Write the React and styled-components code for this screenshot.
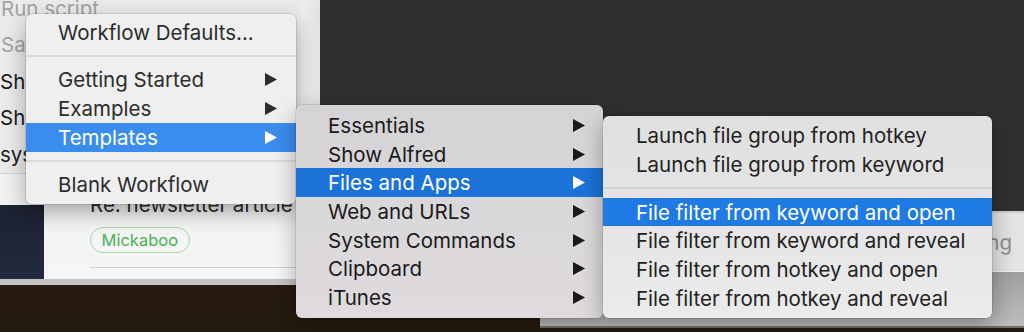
import React from "react";
import styled, { createGlobalStyle } from "styled-components";

const GlobalStyle = createGlobalStyle`
  html, body { margin: 0; padding: 0; }
  body {
    width: 1024px;
    height: 332px;
    overflow: hidden;
    background: #2a1f12;
    font-family: Inter, "Noto Sans", "Liberation Sans", sans-serif;
    -webkit-font-smoothing: antialiased;
  }
`;

const Desktop = styled.div`
  position: relative;
  width: 1024px;
  height: 332px;
  overflow: hidden;
  background: linear-gradient(180deg, #2e2113 0%, #251a0e 100%);
`;

/* ---------- background windows ---------- */

const Window = styled.div`
  position: absolute;
  left: ${(p) => p.$left}px;
  top: ${(p) => p.$top}px;
  width: ${(p) => p.$width}px;
  height: ${(p) => p.$height}px;
  background: ${(p) => p.$bg};
  display: flex;
  flex-direction: column;
  overflow: hidden;
`;

const ListPane = styled.div`
  display: flex;
  flex-direction: column;
  flex-shrink: 0;
  margin-top: -9.5px;
  height: 182.5px;
  border-bottom: 1px solid #d2d2d2;
  background: #ebebeb;
`;

const ListRow = styled.div`
  height: 36.8px;
  line-height: 36px;
  font-size: 20.5px;
  white-space: nowrap;
  color: ${(p) => (p.$muted ? "#a3a3a3" : "#1c1c1c")};
  padding-left: ${(p) => (p.$muted ? 1 : 0)}px;
`;

const Gap = styled.div`
  height: 31px;
  flex-shrink: 0;
  background: #f1f1f1;
`;

const MailArea = styled.div`
  display: flex;
  flex: 1;
  min-height: 0;
  border-bottom: 6px solid #c4c4c4;
`;

const Sidebar = styled.div`
  width: 44px;
  flex-shrink: 0;
  background: linear-gradient(180deg, #1d2232 0%, #232a3d 100%);
`;

const MailContent = styled.div`
  flex: 1;
  min-width: 0;
  display: flex;
  flex-direction: column;
  align-items: flex-start;
  padding-left: 46px;
  background: linear-gradient(180deg, #e6e6e6 0%, #f3f3f3 40%, #f6f6f6 100%);
  margin-top: -32px;
  padding-top: 19.5px;
`;

const Subject = styled.div`
  font-size: 20.5px;
  line-height: 24px;
  color: #2a2a2a;
  white-space: nowrap;
`;

const Tag = styled.div`
  margin-top: 10.5px;
  height: 26px;
  box-sizing: border-box;
  padding: 0 10.5px;
  border: 1.5px solid #a6d9a6;
  border-radius: 13px;
  display: flex;
  align-items: center;
  font-size: 16.5px;
  color: #4caf55;
`;

const Rule = styled.div`
  margin-top: 14px;
  align-self: stretch;
  height: 1px;
  background: #cfcfcf;
`;

const DarkPane = styled.div`
  flex: 1;
  background: #303030;
`;

const EdgeStrip = styled.div`
  flex: 1;
  background: linear-gradient(90deg, #f0f0f0, #e2e2e2);
`;

const RightTop = styled.div`
  height: 61px;
  flex-shrink: 0;
  box-sizing: border-box;
  border-top: 2px solid #cfcfcf;
  border-bottom: 1px solid #f2f2f2;
  background: #e3e3e3;
  display: flex;
  align-items: center;
  justify-content: flex-end;
  padding-right: 12px;
  font-size: 20.5px;
  color: #8c8c8c;
`;

const RightBottom = styled.div`
  flex: 1;
  background: linear-gradient(180deg, #9f9f9f 0%, #bdbdbd 100%);
  border-bottom: 2px solid #6e6e6e;
`;

/* ---------- menus ---------- */

const Menu = styled.div`
  position: absolute;
  left: ${(p) => p.$left}px;
  top: ${(p) => p.$top}px;
  width: ${(p) => p.$width}px;
  z-index: ${(p) => p.$z};
  box-sizing: border-box;
  padding: ${(p) => p.$pad};
  border-radius: 6px;
  background: ${(p) => p.$bg};
  box-shadow: 0 0 0 0.5px rgba(0, 0, 0, 0.18), 0 8px 22px rgba(0, 0, 0, 0.32);
  display: flex;
  flex-direction: column;
`;

const Item = styled.div`
  height: 28.7px;
  display: flex;
  align-items: center;
  justify-content: space-between;
  padding: 0 ${(p) => p.$pr}px 0 ${(p) => p.$pl}px;
  font-size: 20.5px;
  white-space: nowrap;
  color: ${(p) => (p.$active ? "#ffffff" : p.$fg)};
  background: ${(p) => (p.$active ? p.$hl : "transparent")};
`;

const Separator = styled.div`
  height: 18.8px;
  display: flex;
  align-items: center;
  &::after {
    content: "";
    flex: 1;
    height: 2px;
    background: ${(p) => p.$line};
  }
`;

const Arrow = ({ color }) => (
  <svg width="12" height="13" viewBox="0 0 12 13">
    <polygon points="0,0 12,6.5 0,13" fill={color} />
  </svg>
);

const MenuList = ({ items, theme }) =>
  items.map((it, i) =>
    it === "-" ? (
      <Separator key={i} $line={theme.line} />
    ) : (
      <Item
        key={i}
        $active={it.active}
        $hl={theme.hl}
        $fg={theme.fg}
        $pl={theme.pl}
        $pr={theme.pr}
      >
        <span>{it.label}</span>
        {it.sub && <Arrow color={it.active ? "#ffffff" : theme.arrow} />}
      </Item>
    )
  );

const menu1 = [
  { label: "Workflow Defaults..." },
  "-",
  { label: "Getting Started", sub: true },
  { label: "Examples", sub: true },
  { label: "Templates", sub: true, active: true },
  "-",
  { label: "Blank Workflow" },
];

const menu2 = [
  { label: "Essentials", sub: true },
  { label: "Show Alfred", sub: true },
  { label: "Files and Apps", sub: true, active: true },
  { label: "Web and URLs", sub: true },
  { label: "System Commands", sub: true },
  { label: "Clipboard", sub: true },
  { label: "iTunes", sub: true },
];

const menu3 = [
  { label: "Launch file group from hotkey" },
  { label: "Launch file group from keyword" },
  "-",
  { label: "File filter from keyword and open", active: true },
  { label: "File filter from keyword and reveal" },
  { label: "File filter from hotkey and open" },
  { label: "File filter from hotkey and reveal" },
];

const theme1 = { hl: "#3b8cef", fg: "#2c2c2c", arrow: "#2c2c2c", line: "#dadada", pl: 32, pr: 19 };
const theme2 = { hl: "#1b72d8", fg: "#1a1a1a", arrow: "#1a1a1a", line: "#c8c6c8", pl: 32, pr: 18 };
const theme3 = { hl: "#1f7ae3", fg: "#222222", arrow: "#222222", line: "#d2d2d2", pl: 33, pr: 18 };

export default function App() {
  return (
    <>
      <GlobalStyle />
      <Desktop>
        <Window $left={0} $top={0} $width={320} $height={285} $bg="#ebebeb">
          <ListPane>
            <ListRow $muted>Run script</ListRow>
            <ListRow $muted>Save file</ListRow>
            <ListRow>Show Alfred</ListRow>
            <ListRow>Show Workflow</ListRow>
            <ListRow>system command</ListRow>
          </ListPane>
          <Gap />
          <MailArea>
            <Sidebar />
            <MailContent>
              <Subject>Re: newsletter article draft</Subject>
              <Tag>Mickaboo</Tag>
              <Rule />
            </MailContent>
          </MailArea>
        </Window>

        <Window $left={320} $top={0} $width={704} $height={212} $bg="#303030">
          <DarkPane />
        </Window>

        <Window $left={300} $top={0} $width={20} $height={212} $bg="#eeeeee">
          <EdgeStrip />
        </Window>

        <Window $left={540} $top={211} $width={484} $height={117} $bg="#c0c0c0">
          <RightTop>Sending</RightTop>
          <RightBottom />
        </Window>

        <Menu $left={26} $top={14} $width={270} $z={2} $pad="4px 0 5px" $bg="#efefef">
          <MenuList items={menu1} theme={theme1} />
        </Menu>

        <Menu
          $left={296}
          $top={105}
          $width={307}
          $z={3}
          $pad="6px 0 6px"
          $bg="linear-gradient(180deg, #d5d3d5 0%, #dbd8db 60%, #dedadd 100%)"
        >
          <MenuList items={menu2} theme={theme2} />
        </Menu>

        <Menu
          $left={603}
          $top={116}
          $width={389}
          $z={4}
          $pad="5.5px 0 5.5px"
          $bg="linear-gradient(180deg, #e0e0e0 0%, #e6e6e6 60%, #ebebeb 100%)"
        >
          <MenuList items={menu3} theme={theme3} />
        </Menu>
      </Desktop>
    </>
  );
}
